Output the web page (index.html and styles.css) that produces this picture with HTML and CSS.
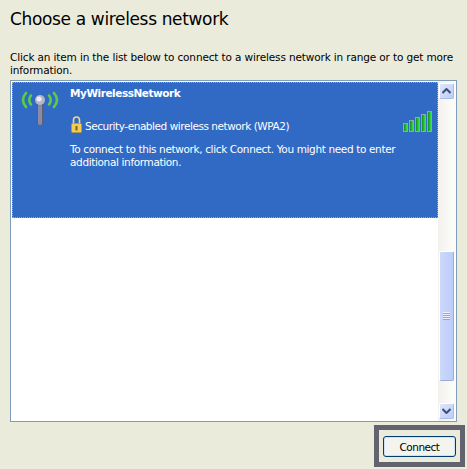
FILE: index.html
```html
<!DOCTYPE html>
<html lang="en">
<head>
<meta charset="UTF-8">
<meta name="viewport" content="width=device-width, initial-scale=1.0">
<title>Choose a wireless network</title>
<link rel="stylesheet" href="styles.css">
</head>

<body>
    <h1 class="title">Choose a wireless network</h1>
    <p class="intro">Click an item in the list below to connect to a wireless network in range or to get more information.</p>

    <div class="list">
        <div class="items">
            <div class="network">
                <svg class="antenna" width="42" height="46" viewBox="0 0 42 46">
                    <g fill="none" stroke="#5ccc44" stroke-width="2.600" stroke-linecap="round">
                        <path d="M7 10 Q1 17 7 24"/>
                        <path d="M12 12.500 Q8.500 17 12 21.500"/>
                        <path d="M35 10 Q41 17 35 24"/>
                        <path d="M30 12.500 Q33.500 17 30 21.500"/>
                    </g>
                    <rect x="18.500" y="18" width="5" height="24.500" rx="2.500" fill="#8a8ca6" stroke="#5c5e78"/>
                    <circle cx="21" cy="17" r="5" fill="#b4b6c8"/>
                    <circle cx="20" cy="16" r="2.500" fill="#eeeef6"/>
                </svg>
                <div class="details">
                    <div class="name">MyWirelessNetwork</div>
                    <div class="security">
                        <svg class="lock" width="11" height="17" viewBox="0 0 11 17">
                            <path d="M2.500 8 V4 Q2.500 1 5.500 1 Q8.500 1 8.500 4 V8" fill="none" stroke="#f0d888" stroke-width="1.600"/>
                            <rect x="0.500" y="7.500" width="10" height="9" rx="1" fill="#f4cc50" stroke="#c49a28" stroke-width="0.600"/>
                            <rect x="4.500" y="10" width="2" height="4.500" fill="#7c6418"/>
                        </svg>
                        <span>Security-enabled wireless network (WPA2)</span>
                    </div>
                    <div class="hint">To connect to this network, click Connect. You might need to enter additional information.</div>
                </div>
                <div class="signal">
                    <span class="bar bar1"></span>
                    <span class="bar bar2"></span>
                    <span class="bar bar3"></span>
                    <span class="bar bar4"></span>
                    <span class="bar bar5"></span>
                </div>
            </div>
        </div>

        <div class="scrollbar">
            <div class="arrow">
                <svg width="9" height="6" viewBox="0 0 9 6"><path d="M0.500 5 L4.500 1 L8.500 5" fill="none" stroke="#3c4e78" stroke-width="2"/></svg>
            </div>
            <div class="track">
                <div class="thumb">
                    <span class="grip"></span>
                </div>
            </div>
            <div class="arrow">
                <svg width="9" height="6" viewBox="0 0 9 6"><path d="M0.500 1 L4.500 5 L8.500 1" fill="none" stroke="#3c4e78" stroke-width="2"/></svg>
            </div>
        </div>
    </div>

    <div class="footer">
        <div class="callout">
            <button class="connect">Connect</button>
        </div>
    </div>
</body>
</html>
```

FILE: styles.css
```css
html, body {
    margin: 0;
    height: 469px;
    overflow: hidden;
}

body {
    background-color: #ebebdc;
    color: #000;
    font-family: "DejaVu Sans", Verdana, sans-serif;
    font-size: 10.500px;
    padding: 0 10px;
    width: 447px;
}

.title {
    margin: 0;
    padding-top: 8px;
    height: 41px;
    font-size: 17px;
    line-height: 22px;
    font-weight: normal;
    letter-spacing: -0.350px;
}

.intro {
    margin: 0;
    padding-top: 2px;
    height: 29px;
    line-height: 13px;
    letter-spacing: -0.140px;
}

.list {
    display: flex;
    height: 340px;
    border: 1px solid #7f9db9;
    background-color: #fff;
}

.items {
    flex: 1;
    min-width: 0;
    padding: 1px 0 0 1px;
}

.network {
    display: flex;
    height: 134px;
    border: 1px dotted #c8a050;
    background-color: #316ac5;
    color: #fff;
    line-height: 13px;
}

.antenna {
    margin: 0 0 0 6px;
    flex: none;
}

.details {
    flex: 1;
    min-width: 0;
    padding: 4px 0 0 9px;
}

.name {
    font-weight: bold;
    letter-spacing: -0.450px;
}

.security {
    display: flex;
    align-items: flex-end;
    gap: 3px;
    margin: 16px 0 0 1px;
    letter-spacing: -0.450px;
}

.hint {
    margin-top: 10px;
    letter-spacing: -0.360px;
}

.signal {
    flex: none;
    display: flex;
    align-items: flex-end;
    gap: 1px;
    height: 21px;
    margin: 28px 5px 0 0;
}

.bar {
    width: 5px;
    box-sizing: border-box;
    border: 1px solid #98a0b4;
    background: linear-gradient(to right, #108a20, #3adc48);
}

.bar1 { height: 9px; }
.bar2 { height: 12px; }
.bar3 { height: 15px; }
.bar4 { height: 18px; }
.bar5 { height: 21px; }

.scrollbar {
    flex: none;
    width: 18px;
    display: flex;
    flex-direction: column;
    padding: 2px 2px 2px 1px;
    box-sizing: border-box;
    background: linear-gradient(to right, #f3f1ec, #fefefb);
}

.arrow {
    flex: none;
    height: 16px;
    display: flex;
    align-items: center;
    justify-content: center;
    box-sizing: border-box;
    border: 1px solid #fff;
    border-bottom-color: #a8bce8;
    border-right-color: #a8bce8;
    border-radius: 2px;
    background: linear-gradient(to bottom right, #dde6fe, #bccdf8);
}

.track {
    flex: 1;
    display: flex;
    flex-direction: column;
    justify-content: flex-end;
    padding-bottom: 22px;
}

.thumb {
    height: 130px;
    box-sizing: border-box;
    display: flex;
    align-items: center;
    justify-content: center;
    border: 1px solid #fff;
    border-bottom-color: #98acd8;
    border-right-color: #98acd8;
    border-radius: 2px;
    background: linear-gradient(to right, #ccd8fc, #bcccf9);
}

.grip {
    width: 7px;
    height: 8px;
    background: repeating-linear-gradient(to bottom, #eef2fe 0, #eef2fe 1px, #8ea6e4 1px, #8ea6e4 2px);
}

.footer {
    display: flex;
    justify-content: flex-end;
    margin: 3px -8px 0 0;
}

.callout {
    border: 5px solid #63636f;
    padding: 6px 4px 5px 4px;
    height: 21px;
}

.connect {
    display: block;
    width: 73px;
    height: 21px;
    padding: 0;
    border: 1px solid #003c74;
    border-radius: 3px;
    background-color: #f4f4ee;
    box-shadow: inset 0 0 0 1px #cfe0f7;
    color: #000;
    font-family: "DejaVu Sans", Verdana, sans-serif;
    font-size: 10.500px;
    letter-spacing: -0.500px;
}
```
